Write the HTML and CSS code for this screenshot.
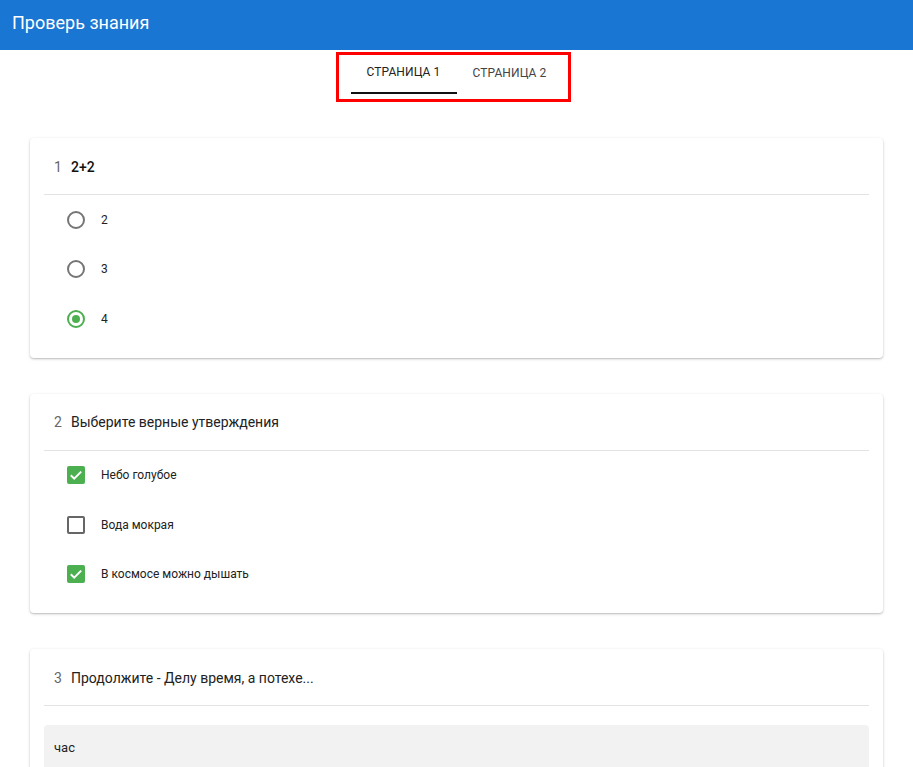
FILE: index.html
```html
<!DOCTYPE html>
<html lang="ru">
<head>
<meta charset="utf-8">
<title>Проверь знания</title>
<link rel="stylesheet" href="styles.css">
</head>
<body>
<header class="appbar">Проверь знания</header>
<nav class="tabs-wrap">
  <div class="tabs">
    <div class="tab active">Страница 1</div>
    <div class="tab">Страница 2</div>
    <span class="highlight"></span>
  </div>
</nav>
<main class="content">
  <section class="card">
    <div class="card-head"><span class="num">1</span><span class="q bold">2+2</span></div>
    <div class="options">
      <label class="opt"><span class="radio"></span><span class="lbl">2</span></label>
      <label class="opt"><span class="radio"></span><span class="lbl">3</span></label>
      <label class="opt"><span class="radio checked"></span><span class="lbl">4</span></label>
    </div>
  </section>
  <section class="card">
    <div class="card-head"><span class="num">2</span><span class="q">Выберите верные утверждения</span></div>
    <div class="options">
      <label class="opt"><span class="check checked"><svg viewBox="0 0 18 18" width="18" height="18"><path d="M3.8 9.2l3.4 3.4 7-7" fill="none" stroke="#fff" stroke-width="2"/></svg></span><span class="lbl">Небо голубое</span></label>
      <label class="opt"><span class="check"></span><span class="lbl">Вода мокрая</span></label>
      <label class="opt"><span class="check checked"><svg viewBox="0 0 18 18" width="18" height="18"><path d="M3.8 9.2l3.4 3.4 7-7" fill="none" stroke="#fff" stroke-width="2"/></svg></span><span class="lbl">В космосе можно дышать</span></label>
    </div>
  </section>
  <section class="card">
    <div class="card-head"><span class="num">3</span><span class="q">Продолжите - Делу время, а потехе...</span></div>
    <div class="field">час</div>
  </section>
</main>
</body>
</html>
```
FILE: styles.css
```css
* { box-sizing: border-box; }
html, body { margin: 0; padding: 0; }
body {
  font-family: Roboto, "Noto Sans", "Liberation Sans", sans-serif;
  color: #212121;
  background: #fff;
  width: 913px;
  overflow: hidden;
}
.appbar {
  height: 50px;
  background: #1976d2;
  color: #fff;
  font-size: 18px;
  line-height: 46px;
  padding-left: 12px;
}
.tabs-wrap {
  display: flex;
  justify-content: center;
  height: 48px;
  margin-top: 2px;
}
.tabs {
  position: relative;
  display: flex;
}
.tab {
  width: 106px;
  height: 42px;
  display: flex;
  align-items: center;
  justify-content: center;
  text-transform: uppercase;
  font-size: 12px;
  color: #444;
  letter-spacing: 0.1px;
}
.tab.active {
  color: #222;
  border-bottom: 2px solid #111;
}
.highlight {
  position: absolute;
  left: -15px;
  right: -8px;
  top: 0;
  bottom: -2px;
  border: 3px solid #ff0000;
}
.content {
  padding: 38px 30px 0 30px;
  display: flex;
  flex-direction: column;
  gap: 36px;
}
.card {
  background: #fff;
  border-radius: 4px;
  box-shadow: 0 1px 3px rgba(0,0,0,0.22), 0 1px 1px rgba(0,0,0,0.08);
  padding: 0 14px 14px 14px;
}
.card-head {
  height: 57px;
  display: flex;
  align-items: center;
  padding-left: 10px;
  padding-top: 1px;
  border-bottom: 1px solid #e3e3e3;
  font-size: 14px;
}
.num {
  color: #666;
  width: 17px;
}
.q { color: #222; }
.q.bold { font-weight: 500; color: #111; }
.options {
  padding-top: 0;
}
.opt {
  display: flex;
  align-items: center;
  height: 49.5px;
  padding-left: 23px;
  font-size: 12px;
  color: #222;
}
.lbl { margin-left: 16px; }
.radio {
  width: 18px;
  height: 18px;
  border: 2px solid #757575;
  border-radius: 50%;
  display: flex;
  align-items: center;
  justify-content: center;
}
.radio.checked { border-color: #4caf50; }
.radio.checked::after {
  content: "";
  width: 8px;
  height: 8px;
  border-radius: 50%;
  background: #4caf50;
}
.check {
  width: 18px;
  height: 18px;
  border: 2px solid #666;
  border-radius: 2px;
  display: flex;
}
.check.checked {
  border: none;
  background: #4caf50;
}
.field {
  margin-top: 19px;
  height: 56px;
  background: #f2f2f2;
  border-radius: 4px 4px 0 0;
  padding: 15px 10px;
  font-size: 13px;
  color: #222;
}
```
